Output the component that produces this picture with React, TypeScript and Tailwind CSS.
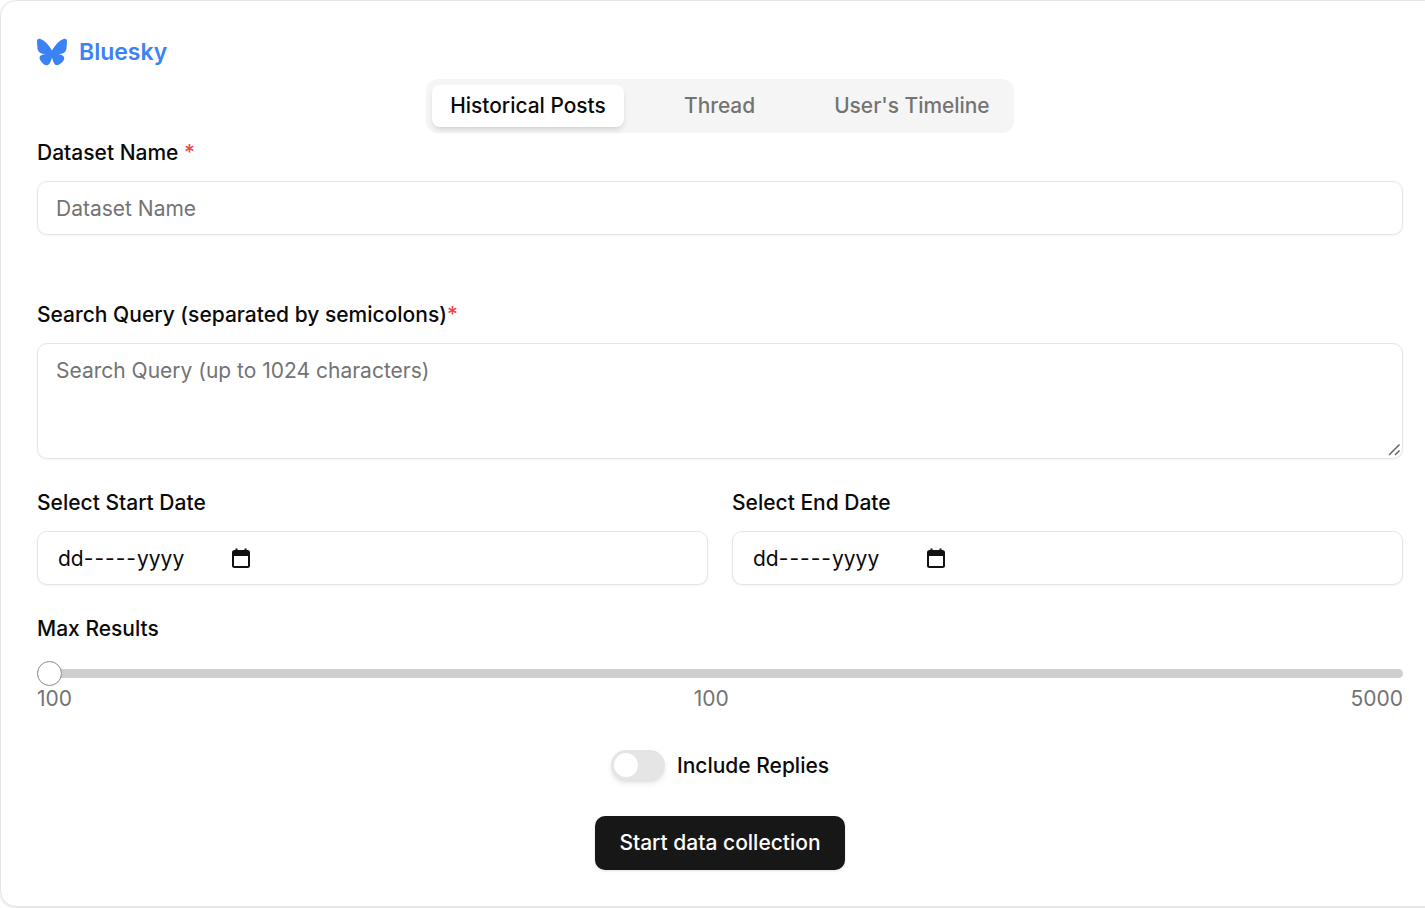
import React from 'react';
import { FaBluesky } from 'react-icons/fa6';

// --- Calendar glyph of the date fields ---
const CalendarIcon = () => (
  <svg width="24" height="24" viewBox="0 0 24 24" className="text-[#111]" fill="none" stroke="currentColor">
    <rect x="4" y="5" width="16" height="16" rx="1.5" strokeWidth="2" />
    <path d="M4 7.5h16" strokeWidth="5" />
    <path d="M7.5 2.5v3M16.5 2.5v3" strokeWidth="2" />
  </svg>
);

const Label = ({ children }: { children: React.ReactNode }) => (
  <div className="h-6 pt-px text-[21px] leading-6 font-medium text-[#0a0a0a]">{children}</div>
);

const DateField = ({ label }: { label: string }) => (
  <div className="flex-1">
    <Label>{label}</Label>
    <div className="mt-[17px] flex h-[54px] items-center rounded-[10px] border border-[#e5e5e5] bg-white pl-5 shadow-xs">
      <span className="w-[171px] pt-px text-[21px] text-[#0a0a0a]">
        dd<span className="tracking-[1px]">-----</span>yyyy
      </span>
      <CalendarIcon />
    </div>
  </div>
);

export default function App() {
  const tabs = ["Thread", "User's Timeline"];

  return (
    <div className="h-[908px] w-screen overflow-hidden bg-white font-['Inter',sans-serif]">
      <div className="h-[907px] w-[1440px] rounded-[16px] border border-[#e5e5e5] px-9 pt-[37px] shadow-sm">
        {/* Source */}
        <div className="flex h-7 items-center gap-3 text-[#3b82f6]">
          <FaBluesky size={30} />
          <span className="text-[23px] font-semibold">Bluesky</span>
        </div>

        {/* Tabs */}
        <div className="mx-auto mt-[13px] flex h-[54px] w-[588px] items-center rounded-[12px] bg-[#f5f5f5] pl-[6px]">
          <div className="flex h-[42px] w-[192px] items-center justify-center rounded-[8px] bg-white text-[20.9px] font-medium text-[#0a0a0a] shadow-md">
            Historical Posts
          </div>
          <div className="ml-[60px] text-[20.9px] font-medium text-[#737373]">{tabs[0]}</div>
          <div className="ml-[79px] text-[20.9px] font-medium text-[#737373]">{tabs[1]}</div>
        </div>

        {/* Dataset name */}
        <div className="mt-[7px]">
          <Label>
            Dataset Name <span className="text-[#ef4444]">*</span>
          </Label>
        </div>
        <input
          placeholder="Dataset Name"
          className="mt-[17px] block h-[54px] w-full rounded-[10px] border border-[#e5e5e5] bg-white px-[18px] text-[21px] shadow-xs placeholder:text-[#737373]"
        />

        {/* Search query */}
        <div className="mt-[67px]">
          <Label>
            Search Query (separated by semicolons)<span className="text-[#ef4444]">*</span>
          </Label>
        </div>
        <div className="relative mt-[17px]">
          <textarea
            placeholder="Search Query (up to 1024 characters)"
            className="block h-[116px] w-full resize-none rounded-[10px] border border-[#e5e5e5] bg-white px-[18px] py-[11px] text-[21px] shadow-xs placeholder:text-[#737373]"
          />
          <svg width="14" height="14" viewBox="0 0 14 14" className="absolute right-0.5 bottom-0.5 text-[#666]" stroke="currentColor" strokeWidth="1.5">
            <path d="M2 12 12.5 1.5M8 12l4.5-4.5" />
          </svg>
        </div>

        {/* Dates */}
        <div className="mt-[31px] flex gap-6">
          <DateField label="Select Start Date" />
          <DateField label="Select End Date" />
        </div>

        {/* Max results */}
        <div className="mt-[31px]">
          <Label>Max Results</Label>
        </div>
        <div className="mt-[21px] flex h-[25px] items-center">
          <div className="h-[9px] w-full rounded-full bg-[#cfcfcf]">
            <div className="-mt-[8px] h-[25px] w-[25px] rounded-full border border-[#8a8a8a] bg-white" />
          </div>
        </div>
        <div className="mt-px flex h-6 items-center justify-between text-[21px] text-[#737373]">
          <span>100</span>
          <span>100</span>
          <span>5000</span>
        </div>

        {/* Replies toggle */}
        <div className="mt-[39px] flex h-[30px] items-center justify-center gap-3">
          <div className="flex h-[30px] w-[54px] items-center rounded-full bg-[#e5e5e5] pl-[3px] shadow-md">
            <div className="h-[24px] w-[24px] rounded-full bg-white" />
          </div>
          <span className="pt-px text-[21px] font-medium text-[#0a0a0a]">Include Replies</span>
        </div>

        {/* Submit */}
        <div className="mt-[36px] flex justify-center">
          <button className="h-[54px] w-[250px] rounded-[10px] bg-[#171717] text-[21px] font-medium text-white shadow-sm">
            Start data collection
          </button>
        </div>
      </div>
    </div>
  );
}
